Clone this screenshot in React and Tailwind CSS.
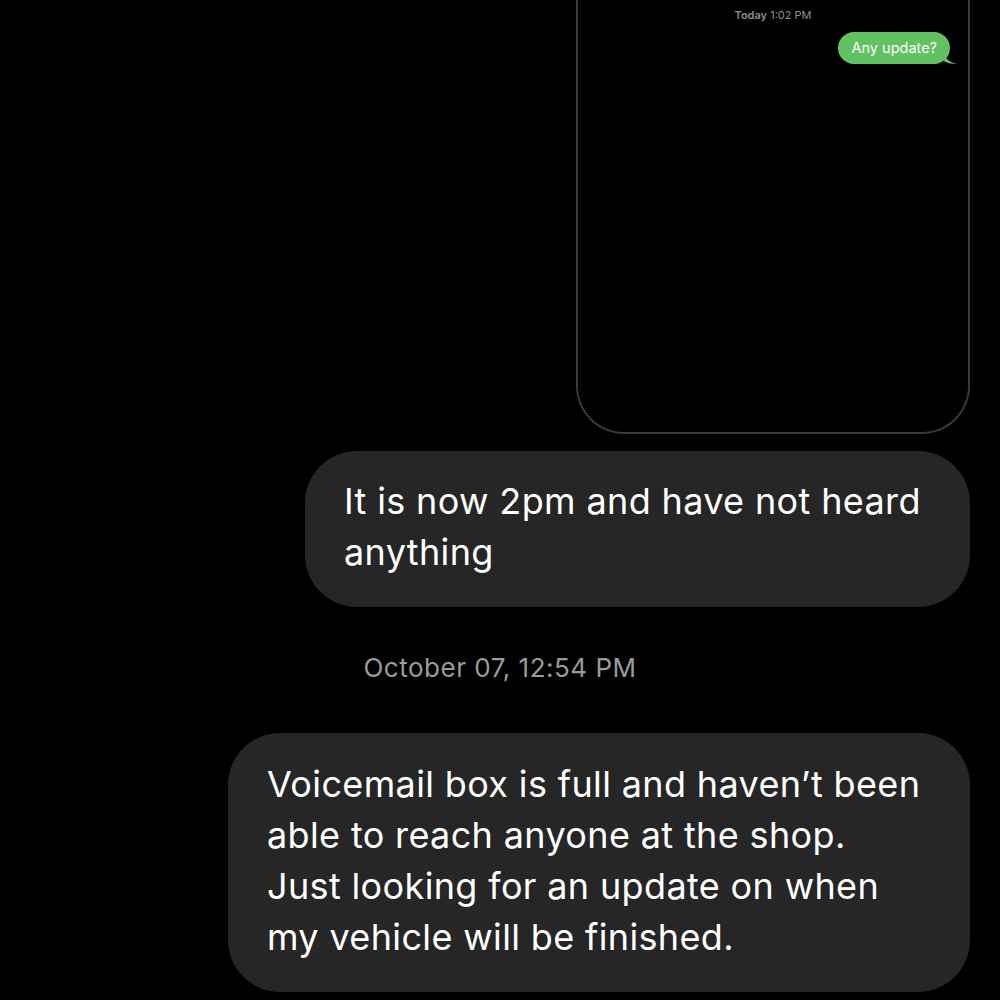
import React from "react";

const font = { fontFamily: "Inter, 'Noto Sans', sans-serif" };

function Tail() {
  return (
    <svg
      className="absolute -right-[7px] bottom-0"
      width="14"
      height="12"
      viewBox="0 0 14 12"
    >
      <path d="M0 0 C2 6 6 10 14 12 C8 12 3 11 0 8 Z" fill="#62c163" />
    </svg>
  );
}

export default function App() {
  return (
    <div
      className="w-[1000px] h-[1000px] bg-black overflow-hidden flex flex-col items-end pr-[30px]"
      style={font}
    >
      <div className="w-[394px] h-[434px] border-x-2 border-b-2 border-[#3a3a3a] rounded-b-[48px] flex flex-col">
        <div className="text-center text-[11px] leading-[14px] text-[#8e8e8e] mt-[8px]">
          <span className="font-semibold">Today</span> 1:02 PM
        </div>
        <div className="flex justify-end pr-[18px] mt-[10px]">
          <div className="relative bg-[#62c163] text-white text-[14.5px] leading-[18px] rounded-[16px] px-[13px] py-[7px]">
            Any update?
            <Tail />
          </div>
        </div>
      </div>

      <div className="mt-[17px] w-[665px] bg-[#262626] rounded-[52px] pl-[39px] pr-[20px] pt-[25px] pb-[29px] text-white text-[36px] leading-[51px] tracking-[0.01em] whitespace-nowrap">
        It is now 2pm and have not heard
        <br />
        anything
      </div>

      <div className="self-center w-[1000px] -mr-[30px] mt-[46px] text-center text-[26px] leading-[30px] text-[#9a9a9a] tracking-[0.02em]">
        October 07, 12:54 PM
      </div>

      <div className="mt-[50px] w-[742px] bg-[#262626] rounded-[52px] pl-[39px] pr-[20px] pt-[26px] pb-[29px] text-white text-[36px] leading-[51px] tracking-[0.01em] whitespace-nowrap">
        Voicemail box is full and haven’t been
        <br />
        able to reach anyone at the shop.
        <br />
        Just looking for an update on when
        <br />
        my vehicle will be finished.
      </div>
    </div>
  );
}
